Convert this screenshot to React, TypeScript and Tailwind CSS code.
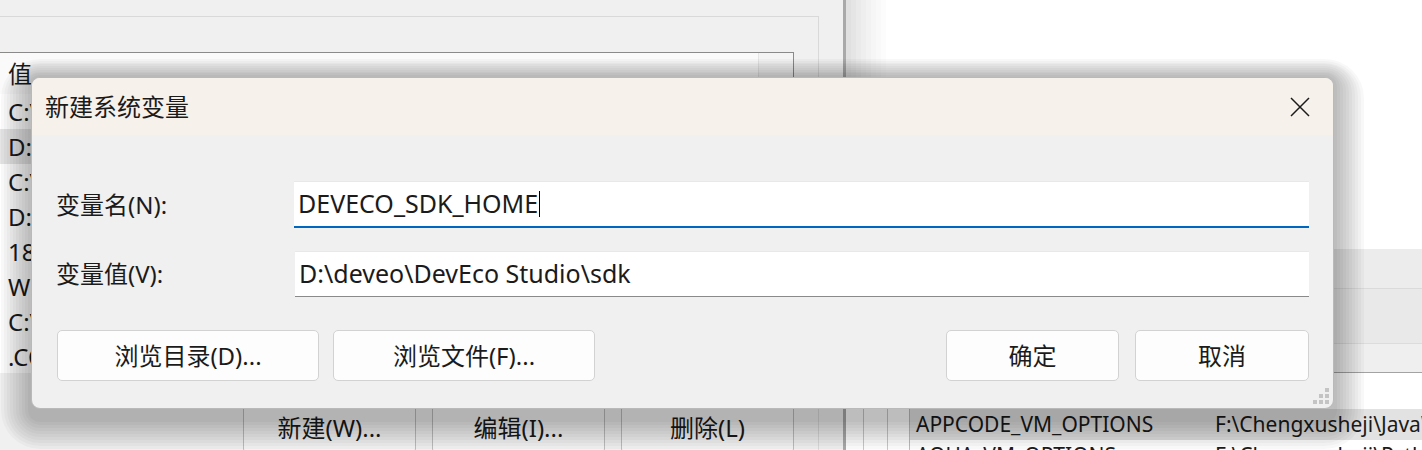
const font = "font-['Noto_Sans','Noto_Sans_CJK_SC',sans-serif]"

const leftRows = [
  'C:\\Windows\\system32',
  'D:\\Java\\jdk1.8.0_301\\bin',
  'C:\\Windows\\System32\\Wbem',
  'D:\\Java\\jre\\lib',
  '18',
  'Windows_NT',
  'C:\\Windows\\TEMP',
  '.COM;.EXE;.BAT;.CMD;.VBS',
]

function LeftWindow() {
  return (
    <div className="w-[846px] h-full shrink-0 bg-[#f0f0f0] border-r-[3px] border-[#a9a9a9] flex flex-col">
      <div className="h-4 shrink-0" />
      <div className="w-[819px] border-t border-r border-[#d9d9d9] flex flex-col">
        <div className="h-[35px]" />
        <div className="w-[794px] h-[321px] bg-white border-t border-r border-[#8a8a8a] flex flex-col overflow-hidden">
          <div className="h-[41px] shrink-0 flex bg-[#fafafa]">
            <div className="flex-1 pl-2 flex items-center text-[24px] text-[#1b1b1b]">值</div>
            <div className="w-[35px] border-l border-[#e5e5e5] bg-[#f4f4f4]" />
          </div>
          {leftRows.map((r, i) => (
            <div
              key={i}
              className={
                'h-[35px] shrink-0 pl-2 flex items-center text-[24px] text-[#1b1b1b] whitespace-nowrap ' +
                (i === 1 ? 'bg-[#e5e5e5]' : '')
              }
            >
              {r}
            </div>
          ))}
        </div>
        <div className="h-[30px]" />
        <div className="w-[794px] flex justify-end gap-4">
          {['新建(W)...', '编辑(I)...', '删除(L)'].map((t) => (
            <div
              key={t}
              className="w-[173px] h-[50px] bg-[#f3f3f3] border border-[#bdbdbd] rounded flex items-center justify-center text-[24px] text-[#1b1b1b]"
            >
              {t}
            </div>
          ))}
        </div>
      </div>
    </div>
  )
}

function RightWindow() {
  return (
    <div className="flex-1 h-full bg-white flex">
      {/* shading cast by the left window */}
      <div className="w-[40px] shrink-0 flex">
        <div className="w-[5px] bg-[#e0e0e0]" />
        <div className="w-[5px] bg-[#e5e5e5]" />
        <div className="w-[5px] bg-[#eaeaea]" />
        <div className="w-[5px] bg-[#eeeeee]" />
        <div className="w-[5px] bg-[#f2f2f2]" />
        <div className="w-[5px] bg-[#f6f6f6]" />
        <div className="w-[5px] bg-[#f9f9f9]" />
        <div className="w-[5px] bg-[#fcfcfc]" />
      </div>
      <div className="flex-1 flex flex-col -ml-[40px]">
        <div className="h-[249px] shrink-0" />
        <div className="h-[39px] shrink-0 bg-[#ececec]" />
        <div className="h-[55px] shrink-0 bg-[#e9e9e9] border-t border-[#dadada]" />
        <div className="h-[30px] shrink-0 bg-[#efefef] border-t border-[#dcdcdc] border-b border-b-[#a3a3a3]" />
        <div className="flex-1 flex bg-white">
          <div className="w-[18px] border-r border-[#c9c9c9]" />
          <div className="w-[24px] border-r border-[#c9c9c9]" />
          <div className="w-[22px] border-r border-[#bdbdbd]" />
          <div className="flex-1 flex flex-col pt-[36px] text-[21px] text-[#1b1b1b] whitespace-nowrap">
            <div className="h-[31px] shrink-0 bg-[#e2e2e2] flex items-center">
              <span className="w-[305px] pl-[6px]">APPCODE_VM_OPTIONS</span>
              <span>F:\Chengxusheji\JavaWeb\IntelliJ IDEA\bin\idea64.vmoptions</span>
            </div>
            <div className="h-[31px] shrink-0 flex items-center">
              <span className="w-[305px] pl-[6px]">AQUA_VM_OPTIONS</span>
              <span>F:\Chengxusheji\Python\PyCharm\bin\pycharm64.vmoptions</span>
            </div>
          </div>
        </div>
      </div>
    </div>
  )
}

function Grip() {
  const dots = [
    [2, 0],
    [1, 1],
    [2, 1],
    [0, 2],
    [1, 2],
    [2, 2],
  ]
  return (
    <svg className="absolute right-[3px] bottom-[3px]" width="17" height="17" viewBox="0 0 17 17">
      {dots.map(([x, y], i) => (
        <rect key={i} x={x * 6} y={y * 6} width="4" height="4" fill="#c4c4c4" />
      ))}
    </svg>
  )
}

function Dialog() {
  return (
    <div className="absolute left-[31px] top-[77px] w-[1303px] h-[332px] rounded-[9px] border border-[#b9b9b9] bg-[#f0f0f0] overflow-hidden flex flex-col">
      <div className="h-[57px] shrink-0 bg-[#f7f1eb] flex items-center justify-between pl-[13px] pr-[23px]">
        <span className="text-[24px] text-[#1b1b1b]">新建系统变量</span>
        <svg width="20" height="20" viewBox="0 0 20 20">
          <path d="M1 1 L19 19 M19 1 L1 19" stroke="#1b1b1b" strokeWidth="1.5" />
        </svg>
      </div>
      <div className="flex-1 relative flex flex-col pl-[24px] pr-[24px] pt-[46px]">
        <div className="flex items-center h-[47px]">
          <span className="w-[238px] shrink-0 text-[24px] text-[#1b1b1b]">变量名(N):</span>
          <div className="flex-1 h-full bg-white border-t border-[#e8e8e8] border-b-2 border-b-[#0067c0] flex items-center pl-[4px] text-[25px] text-[#1b1b1b]">
            DEVECO_SDK_HOME
            <span className="w-px h-[26px] bg-black ml-px" />
          </div>
        </div>
        <div className="h-[23px]" />
        <div className="flex items-center h-[46px]">
          <span className="w-[239px] shrink-0 text-[24px] text-[#1b1b1b]">变量值(V):</span>
          <div className="flex-1 h-full bg-white border-t border-[#e8e8e8] border-b border-b-[#8a8a8a] flex items-center pl-[4px] text-[25px] text-[#1b1b1b]">
            D:\deveo\DevEco Studio\sdk
          </div>
        </div>
        <div className="h-[33px]" />
        <div className="flex h-[51px] text-[24px] text-[#1b1b1b]">
          <div className="w-[262px] ml-px bg-[#fdfdfd] border border-[#d2d2d2] rounded-[5px] flex items-center justify-center">浏览目录(D)...</div>
          <div className="w-[262px] ml-[14px] bg-[#fdfdfd] border border-[#d2d2d2] rounded-[5px] flex items-center justify-center">浏览文件(F)...</div>
          <div className="flex-1" />
          <div className="w-[173px] bg-[#fdfdfd] border border-[#d2d2d2] rounded-[5px] flex items-center justify-center">确定</div>
          <div className="w-[174px] ml-[16px] bg-[#fdfdfd] border border-[#d2d2d2] rounded-[5px] flex items-center justify-center">取消</div>
        </div>
        <Grip />
      </div>
    </div>
  )
}

// layered translucent frames standing in for the dialog's drop shadow
const shadowLayers = [
  'absolute left-[1px] top-[59px] w-[1363px] h-[390px] rounded-[39px] bg-[#00000007]',
  'absolute left-[4px] top-[61px] w-[1357px] h-[385px] rounded-[36px] bg-[#00000007]',
  'absolute left-[7px] top-[63px] w-[1351px] h-[380px] rounded-[33px] bg-[#00000007]',
  'absolute left-[10px] top-[64px] w-[1345px] h-[376px] rounded-[30px] bg-[#00000007]',
  'absolute left-[13px] top-[66px] w-[1339px] h-[371px] rounded-[27px] bg-[#00000007]',
  'absolute left-[16px] top-[68px] w-[1333px] h-[366px] rounded-[24px] bg-[#00000007]',
  'absolute left-[19px] top-[70px] w-[1327px] h-[361px] rounded-[21px] bg-[#00000007]',
  'absolute left-[22px] top-[72px] w-[1321px] h-[356px] rounded-[18px] bg-[#00000007]',
  'absolute left-[25px] top-[73px] w-[1315px] h-[352px] rounded-[15px] bg-[#00000007]',
  'absolute left-[28px] top-[75px] w-[1309px] h-[347px] rounded-[12px] bg-[#00000007]',
]

export default function App() {
  return (
    <div className={'relative w-[1422px] h-[450px] overflow-hidden flex ' + font}>
      <LeftWindow />
      <RightWindow />
      {shadowLayers.map((c, i) => (
        <div key={i} className={c} />
      ))}
      <Dialog />
    </div>
  )
}
